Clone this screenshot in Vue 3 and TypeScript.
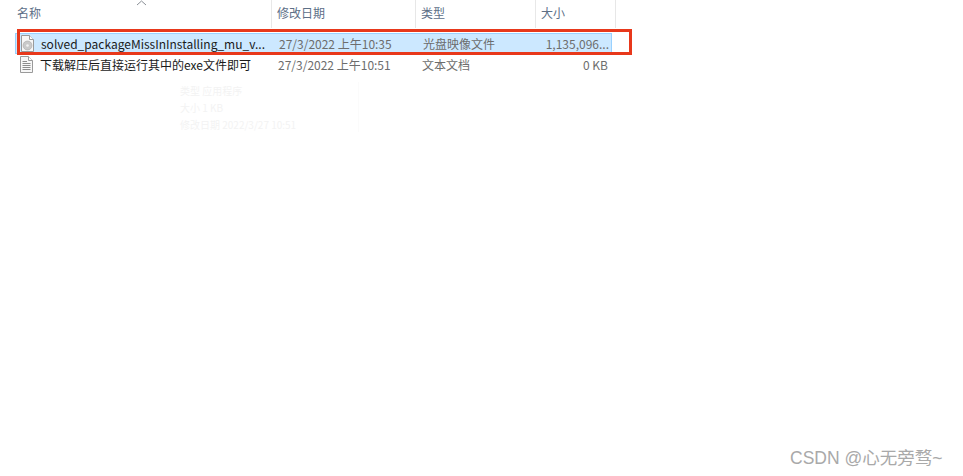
<script setup lang="ts">
interface Row { name: string; date: string; type: string; size: string; kind: string; selected: boolean }
const rows: Row[] = [
  { name: 'solved_packageMissInInstalling_mu_v...', date: '27/3/2022 上午10:35', type: '光盘映像文件', size: '1,135,096...', kind: 'disc', selected: true },
  { name: '下载解压后直接运行其中的exe文件即可', date: '27/3/2022 上午10:51', type: '文本文档', size: '0 KB', kind: 'text', selected: false },
]
const headers = ['名称', '修改日期', '类型', '大小']
const ghost = ['类型  应用程序', '大小  1 KB', '修改日期  2022/3/27 10:51']
</script>

<template>
  <main class="page">
    <div class="header">
      <div v-for="h in headers" :key="h" class="hcell">{{ h }}</div>
      <svg class="sort" width="11" height="6" viewBox="0 0 11 6"><path d="M1 5 L5.5 1 L10 5" fill="none" stroke="#8a8f96" stroke-width="1" /></svg>
    </div>
    <div class="rows">
      <div v-for="r in rows" :key="r.name" class="row" :class="{ selected: r.selected }">
        <div class="name">
          <svg class="icon" width="16" height="18" viewBox="0 0 16 18">
            <path d="M2.5 .5 H10.5 L14.5 4.5 V16.5 H2.5 Z" fill="#f7f7f7" stroke="#9a9a9a" />
            <path d="M10.5 .5 V4.5 H14.5" fill="#fff" stroke="#9a9a9a" />
            <template v-if="r.kind === 'disc'">
              <circle cx="8.5" cy="10.5" r="4.5" fill="#c9c9c9" stroke="#a8a8a8" stroke-width=".6" />
              <circle cx="8.5" cy="10.5" r="1.3" fill="#f2f2f2" />
            </template>
            <path v-else d="M4.5 5.5 H9 M4.5 7.5 H12.5 M4.5 9.5 H12.5 M4.5 11.5 H12.5 M4.5 13.5 H12.5" stroke="#8c8c8c" fill="none" />
          </svg>
          <span class="name-text">{{ r.name }}</span>
        </div>
        <div class="cell date">{{ r.date }}</div>
        <div class="cell type">{{ r.type }}</div>
        <div class="cell size">{{ r.size }}</div>
      </div>
    </div>
    <div class="ghost">
      <div v-for="g in ghost" :key="g">{{ g }}</div>
    </div>
    <div class="redbox"></div>
    <div class="mark">CSDN @心无旁骛~</div>
  </main>
</template>

<style>
html, body { margin: 0; background: #fff; }
</style>

<style scoped>
.page {
  position: relative;
  width: 963px;
  height: 476px;
  overflow: hidden;
  background: #fff;
  font-family: "Noto Sans CJK SC", "Noto Sans", sans-serif;
  font-size: 12px;
}
.header {
  position: relative;
  display: grid;
  grid-template-columns: 272px 144px 120px 80px;
  width: 616px;
  height: 28px;
}
.hcell {
  border-right: 1px solid #e5e5e5;
  padding-left: 5px;
  line-height: 26px;
  color: #4c607a;
  opacity: .9;
}
.hcell:first-of-type { padding-left: 17px; }
.sort { position: absolute; left: 136px; top: 0; }
.rows {
  margin: 5px 0 0 15px;
  width: 597px;
  display: flex;
  flex-direction: column;
}
.row {
  display: grid;
  grid-template-columns: 257px 144px 120px 76px;
  height: 21px;
  line-height: 21px;
  box-sizing: border-box;
}
.row.selected {
  background: #cce8ff;
  border: 1px solid #99d1ff;
  line-height: 19px;
}
.row:not(.selected) { margin-top: 0; line-height: 21px; }
.name {
  display: flex;
  align-items: center;
  gap: 6px;
  padding-left: 3px;
  color: #1a1a1a;
  white-space: nowrap;
}
.icon { flex: none; }
.cell { padding-left: 6px; color: #6d6d6d; white-space: nowrap; }
.size { text-align: right; padding: 0 4px 0 0; }
.ghost {
  position: absolute;
  left: 180px;
  top: 82px;
  width: 178px;
  height: 50px;
  border-right: 1px solid #fbfbfb;
  font-size: 10px;
  line-height: 17px;
  color: #f3f3f3;
}
.redbox {
  position: absolute;
  left: 17px;
  top: 29px;
  width: 615px;
  height: 26px;
  box-sizing: border-box;
  border: 3px solid #e8381b;
}
.mark {
  position: absolute;
  left: 790px;
  top: 447px;
  font-family: "Liberation Sans", "Noto Sans CJK SC", sans-serif;
  font-size: 17.5px;
  line-height: 22px;
  color: #a9a9a9;
  white-space: nowrap;
}
</style>
